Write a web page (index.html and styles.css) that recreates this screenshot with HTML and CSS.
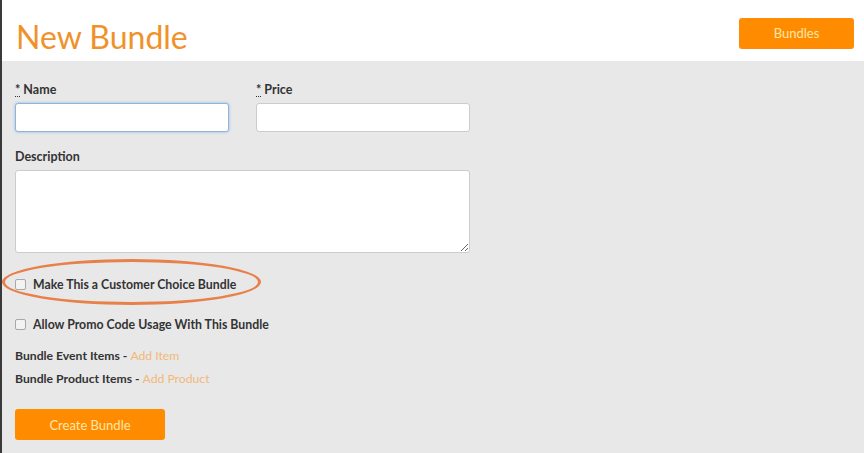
FILE: index.html
```html
<!DOCTYPE html>
<html lang="en">
<head>
    <meta charset="UTF-8">
    <meta name="viewport" content="width=device-width, initial-scale=1.0">
    <title>New Bundle</title>
    <link rel="stylesheet" href="styles.css">
</head>
<body>
    <div class="page">
        <div class="header">
            <h1>New Bundle</h1>
            <a class="btn btn-top" href="#">Bundles</a>
        </div>
        <form class="bundle-form">
            <div class="row">
                <div class="field">
                    <label><abbr title="required">*</abbr> Name</label>
                    <input type="text" class="input focused">
                </div>
                <div class="field">
                    <label><abbr title="required">*</abbr> Price</label>
                    <input type="text" class="input">
                </div>
            </div>
            <div class="field wide">
                <label>Description</label>
                <textarea class="input area"></textarea>
            </div>
            <div class="check first">
                <input type="checkbox" id="choice">
                <label for="choice">Make This a Customer Choice Bundle</label>
                <span class="circle"></span>
            </div>
            <div class="check">
                <input type="checkbox" id="promo">
                <label for="promo">Allow Promo Code Usage With This Bundle</label>
            </div>
            <p class="items"><b>Bundle Event Items - </b><a href="#">Add Item</a></p>
            <p class="items"><b>Bundle Product Items - </b><a href="#">Add Product</a></p>
            <button type="button" class="btn btn-create">Create Bundle</button>
        </form>
    </div>
</body>
</html>
```

FILE: styles.css
```css
html, body {
    margin: 0;
    height: 100%;
}
body {
    font-family: Lato, "Open Sans", Arial, sans-serif;
    background-color: #e8e8e8;
    color: #333;
    overflow: hidden;
}
.page {
    min-height: 100%;
    border-left: 2px solid #3a3a3a;
    box-sizing: border-box;
}
.header {
    background-color: #fff;
    height: 61px;
    display: flex;
    align-items: center;
    justify-content: space-between;
    padding: 0 10px 0 14px;
}
.header h1 {
    margin: 0;
    font-size: 32px;
    font-weight: 400;
    color: #f0922a;
    padding-top: 11px;
}
.btn {
    background-color: #ff8c00;
    color: #ffe7a8;
    border: none;
    border-radius: 3px;
    font-family: inherit;
    font-size: 13px;
    text-decoration: none;
    text-align: center;
    display: inline-block;
    box-sizing: border-box;
}
.btn-top {
    width: 115px;
    height: 31px;
    line-height: 31px;
    margin-top: 5px;
}
.bundle-form {
    padding: 21px 0 0 13px;
}
.row {
    display: flex;
    gap: 27px;
}
.field label {
    display: block;
    font-size: 12.5px;
    font-weight: 700;
    margin-bottom: 5px;
    height: 16px;
}
abbr {
    text-decoration: underline dotted;
    text-decoration-thickness: 1px;
    text-underline-offset: 2px;
}
.input {
    display: block;
    width: 214px;
    height: 29px;
    box-sizing: border-box;
    border: 1px solid #ccc;
    border-radius: 3px;
    background-color: #fff;
    margin: 0 0 1px 0;
    font-family: inherit;
}
.input.focused {
    border-color: #8fb5db;
    box-shadow: 0 0 3px rgba(82, 150, 220, 0.6);
}
.wide {
    margin-top: 16px;
}
.input.area {
    width: 455px;
    height: 83px;
}
.check {
    position: relative;
    display: flex;
    align-items: center;
    gap: 7px;
    font-size: 12.3px;
    font-weight: 700;
    height: 16px;
}
.check.first {
    margin-top: 23px;
}
.check + .check {
    margin-top: 24px;
}
.check input {
    -webkit-appearance: none;
    appearance: none;
    margin: 0;
    width: 11px;
    height: 11px;
    border: 1px solid #a8a8a8;
    border-radius: 2px;
    background-color: #f3f3f3;
}
.circle {
    position: absolute;
    left: -13px;
    top: -17px;
    width: 253px;
    height: 40px;
    border: 3.5px solid #e8804a;
    border-radius: 50%;
}
.items {
    margin: 0;
    font-size: 12.2px;
    height: 23px;
}
.check + .items {
    margin-top: 16px;
}
.items a {
    color: #f2b978;
    text-decoration: none;
}
.btn-create {
    width: 150px;
    height: 31px;
    margin-top: 15px;
}
```
